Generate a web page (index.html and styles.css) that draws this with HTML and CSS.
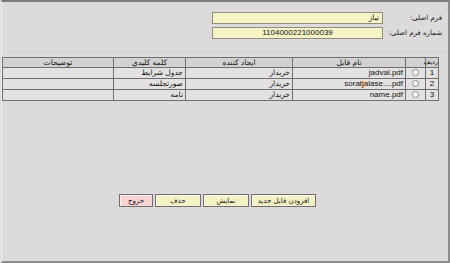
FILE: index.html
```html
<!DOCTYPE html>
<html lang="fa" dir="rtl">
<head>
<meta charset="utf-8">
<link rel="stylesheet" href="styles.css">
</head>
<body>
<div class="frame">
  <div class="form">
    <label class="lbl">فرم اصلی:</label>
    <div class="field">نیاز</div>
    <label class="lbl">شماره فرم اصلی:</label>
    <div class="field center">1104000221000039</div>
  </div>
  <div class="sep"></div>
  <table class="grid">
    <colgroup>
      <col class="c-num"><col class="c-radio"><col class="c-file"><col class="c-creator"><col class="c-key"><col class="c-desc">
    </colgroup>
    <thead>
      <tr><th class="num-h">رديف</th><th></th><th>نام فايل</th><th>ايجاد کننده</th><th>کلمه کليدي</th><th>توضيحات</th></tr>
    </thead>
    <tbody>
      <tr><td class="num">1</td><td class="rad"><span class="radio"></span></td><td>jadval.pdf</td><td>خريدار</td><td>جدول شرايط</td><td></td></tr>
      <tr><td class="num">2</td><td class="rad"><span class="radio"></span></td><td>soratjalase....pdf</td><td>خريدار</td><td>صورتجلسه</td><td></td></tr>
      <tr><td class="num">3</td><td class="rad"><span class="radio"></span></td><td>name.pdf</td><td>خريدار</td><td>نامه</td><td></td></tr>
    </tbody>
  </table>
  <div class="buttons">
    <button class="btn">افزودن فايل جديد</button>
    <button class="btn">نمايش</button>
    <button class="btn">حذف</button>
    <button class="btn exit">خروج</button>
  </div>
</div>
</body>
</html>
```
FILE: styles.css
```css
html, body {
  margin: 0;
  padding: 0;
  background: #dcdada;
}
body {
  font-family: "DejaVu Sans", Tahoma, sans-serif;
  font-size: 7.5px;
  color: #111;
}
.frame {
  box-sizing: border-box;
  width: 449px;
  height: 263px;
  border-top: 2px solid #7c7c7c;
  border-right: 2px solid #8c8c8c;
  border-bottom: 2px solid #8c8c8c;
  border-left: 1px solid #f0f0f0;
  background: #dcdada;
  direction: rtl;
}
.form {
  display: grid;
  grid-template-columns: 56px 171px;
  column-gap: 3px;
  row-gap: 3px;
  padding: 10px 6px 0 0;
  align-items: center;
  justify-content: start;
}
.lbl {
  font-size: 7px;
  line-height: 12px;
  white-space: nowrap;
}
.field {
  box-sizing: border-box;
  height: 12px;
  background: #f6f3c6;
  border: 1px solid #8d8d80;
  font-size: 7.5px;
  line-height: 10px;
  padding: 0 3px;
  text-align: right;
}
.field.center {
  text-align: center;
  font-family: "Liberation Sans", Arial, sans-serif;
  font-size: 8px;
}
.sep {
  margin-top: 12px;
  border-top: 1px dotted #c4c2c2;
  margin-left: 8px;
}
.grid {
  border-collapse: collapse;
  width: 436px;
  margin: 5px 9px 0 0;
  table-layout: fixed;
}
.c-num { width: 13px; }
.c-radio { width: 20px; }
.c-file { width: 113px; }
.c-creator { width: 107px; }
.c-key { width: 72px; }
.c-desc { width: 111px; }
.grid th, .grid td {
  border: 1px solid #6f6f6f;
  padding: 0 2px;
  font-size: 7.5px;
  white-space: nowrap;
  overflow: hidden;
}
.grid th {
  height: 9px;
  line-height: 9px;
  font-weight: normal;
  background: #d3d1d1;
  text-align: center;
}
.grid th.num-h {
  padding: 0;
  overflow: visible;
  font-size: 6.5px;
}
.grid td {
  height: 10px;
  line-height: 10px;
  background: #e3e1e1;
  text-align: right;
}
.grid td.num {
  text-align: center;
  font-family: "Liberation Sans", Arial, sans-serif;
  font-size: 8px;
}
.grid td:nth-child(3) {
  font-family: "Liberation Sans", Arial, sans-serif;
  font-size: 8px;
}
.grid td.rad {
  text-align: center;
}
.radio {
  display: inline-block;
  width: 7px;
  height: 7px;
  border: 1px solid #8a8a8a;
  border-radius: 50%;
  background: #fbfbfb;
  vertical-align: middle;
  box-sizing: border-box;
}
.buttons {
  display: flex;
  gap: 2px;
  padding-right: 132px;
  margin-top: 93px;
}
.btn {
  box-sizing: border-box;
  height: 13px;
  margin: 0;
  padding: 0;
  font-family: "DejaVu Sans", Tahoma, sans-serif;
  font-size: 7px;
  line-height: 10px;
  white-space: nowrap;
  color: #111;
  background: #f4f2c6;
  border: 1px solid #6f6f6f;
  box-shadow: inset 1px 1px 0 #fffde8;
}
.btn:nth-child(1) { width: 65px; }
.btn:nth-child(2) { width: 46px; }
.btn:nth-child(3) { width: 46px; }
.btn.exit { width: 34px; background: #f7d3d3; box-shadow: inset 1px 1px 0 #fff0f0; }
```
